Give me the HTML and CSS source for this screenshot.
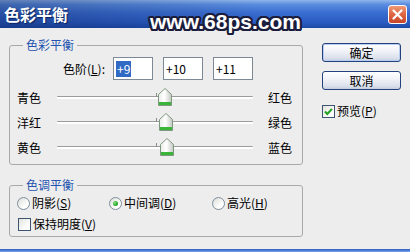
FILE: index.html
```html
<!DOCTYPE html>
<html lang="zh">
<head>
<meta charset="utf-8">
<link rel="stylesheet" href="styles.css">
</head>
<body>
<div class="window">
  <div class="titlebar">
    <span class="title">色彩平衡</span>
    <span class="close"><svg width="11" height="11" viewBox="0 0 11 11"><path d="M1.5 1.5l8 8M9.5 1.5l-8 8" stroke="#fff" stroke-width="2.2" stroke-linecap="round"/></svg></span>
  </div>
  <div class="content">
    <div class="main">
      <div class="group g1">
        <div class="gtitle">色彩平衡</div>
        <div class="levels">
          <span class="lvl-label">色阶(<u>L</u>):</span>
          <span class="field"><span class="sel">+9</span></span>
          <span class="field">+10</span>
          <span class="field">+11</span>
        </div>
        <div class="sliders">
          <div class="srow">
            <span class="sl">青色</span>
            <span class="track">
              <svg class="thumb" style="left:101px" width="14" height="18" viewBox="0 0 14 18"><defs><linearGradient id="tg" x1="0" x2="1" y1="0" y2="0"><stop offset="0" stop-color="#e9ece9"/><stop offset=".45" stop-color="#ffffff"/><stop offset="1" stop-color="#c3c9c3"/></linearGradient></defs><path d="M.5 6.5L7 .5l6.5 6v11H.5z" fill="url(#tg)" stroke="#7f977f"/><rect x="1" y="14" width="12" height="3" fill="#3ab53a"/></svg>
            </span>
            <span class="sr">红色</span>
          </div>
          <div class="srow">
            <span class="sl">洋红</span>
            <span class="track">
              <svg class="thumb" style="left:102px" width="14" height="18" viewBox="0 0 14 18"><path d="M.5 6.5L7 .5l6.5 6v11H.5z" fill="url(#tg)" stroke="#7f977f"/><rect x="1" y="14" width="12" height="3" fill="#3ab53a"/></svg>
            </span>
            <span class="sr">绿色</span>
          </div>
          <div class="srow">
            <span class="sl">黄色</span>
            <span class="track">
              <svg class="thumb" style="left:103px" width="14" height="18" viewBox="0 0 14 18"><path d="M.5 6.5L7 .5l6.5 6v11H.5z" fill="url(#tg)" stroke="#7f977f"/><rect x="1" y="14" width="12" height="3" fill="#3ab53a"/></svg>
            </span>
            <span class="sr">蓝色</span>
          </div>
        </div>
      </div>
      <div class="group g2">
        <div class="gtitle">色调平衡</div>
        <div class="radios">
          <span class="opt o1"><span class="radio"></span>阴影(<u>S</u>)</span>
          <span class="opt o2"><span class="radio on"></span>中间调(<u>D</u>)</span>
          <span class="opt"><span class="radio"></span>高光(<u>H</u>)</span>
        </div>
        <div class="checkrow"><span class="check"></span>保持明度(<u>V</u>)</div>
      </div>
    </div>
    <div class="side">
      <div class="btn btn-default">确定</div>
      <div class="btn">取消</div>
      <div class="preview"><span class="check on"><svg width="11" height="11" viewBox="0 0 11 11"><path d="M2 5.5l2.3 2.5L9 2.8" fill="none" stroke="#21a121" stroke-width="2"/></svg></span>预览(<u>P</u>)</div>
    </div>
  </div>
  <div class="frame-bottom"></div>
  <div class="watermark">www.68ps.com</div>
</div>
</body>
</html>
```

FILE: styles.css
```css
* { box-sizing: border-box; margin: 0; padding: 0; }
html, body { width: 410px; height: 252px; overflow: hidden; }
body {
  font-family: "Noto Sans CJK SC", "Noto Sans", sans-serif;
  font-size: 12px;
  line-height: 16px;
  color: #000;
  background: #ededed;
}
u { text-decoration: underline; text-underline-offset: 1px; }

.window {
  position: relative;
  width: 410px;
  height: 252px;
  display: flex;
  flex-direction: column;
  background: #ededed;
  overflow: hidden;
}

.titlebar {
  height: 28px;
  flex: none;
  display: flex;
  align-items: center;
  justify-content: space-between;
  padding: 0 3px 0 4px;
  background:
    linear-gradient(90deg, rgba(8, 25, 80, .35), rgba(8, 25, 80, 0) 65%),
    linear-gradient(180deg, #90b6ec 0%, #5a8ddf 16%, #3a6ed0 45%, #2a5bc0 80%, #1d4aa8 100%);
}
.title {
  color: #fff;
  font-weight: bold;
  font-size: 16px;
  line-height: 20px;
  text-shadow: 1px 1px 1px #0b2260;
}
.close {
  width: 19px;
  height: 19px;
  border: 1px solid #fff;
  border-radius: 3px;
  background: linear-gradient(180deg, #f09a78 0%, #e06a45 45%, #c8452a 100%);
  display: flex;
  align-items: center;
  justify-content: center;
}

.content {
  flex: 1;
  display: flex;
}
.main {
  width: 294px;
  margin-left: 9px;
  padding-top: 17px;
}

.group {
  border: 1px solid #a9a9a9;
  border-radius: 3px;
}
.gtitle {
  width: fit-content;
  margin: -9px 0 0 13px;
  padding: 0 3px;
  height: 16px;
  line-height: 16px;
  color: #2453b0;
  background: #ededed;
}

.g1 { padding-bottom: 4px; }
.levels {
  display: flex;
  align-items: center;
  height: 23px;
  margin-top: 4px;
  padding-left: 48px;
}
.lvl-label {
  width: 47px;
  text-align: right;
  margin-right: 8px;
}
.field {
  width: 40px;
  height: 23px;
  margin-right: 10px;
  border: 1px solid #7d8a96;
  background: #fff;
  padding-left: 2px;
  line-height: 21px;
}
.sel {
  display: inline-block;
  background: #316ac5;
  color: #fff;
  padding: 0 1px;
  line-height: 16px;
}

.sliders { margin-top: 5px; }
.srow {
  display: flex;
  align-items: center;
  height: 25px;
  padding-left: 7px;
}
.sl { width: 40px; }
.track {
  position: relative;
  width: 196px;
  height: 25px;
  flex: none;
}
.track::before {
  content: "";
  position: absolute;
  left: 0;
  right: 0;
  top: 11px;
  height: 2px;
  border-top: 1px solid #9c9c9c;
  background: #fff;
  border-radius: 1px;
}
.track::after {
  content: "";
  position: absolute;
  left: 99px;
  top: 8px;
  width: 1px;
  height: 4px;
  background: #8c8c8c;
}
.thumb {
  position: absolute;
  top: 3px;
}
.sr { margin-left: 15px; }

.g2 {
  margin-top: 20px;
  padding-bottom: 2px;
}
.radios {
  display: flex;
  align-items: center;
  height: 20px;
  padding-left: 7px;
}
.opt { display: flex; align-items: center; }
.o1 { width: 92px; }
.o2 { width: 103px; }
.radio {
  position: relative;
  width: 13px;
  height: 13px;
  margin-right: 2px;
  border: 1px solid #7d8d9e;
  border-radius: 50%;
  background: linear-gradient(135deg, #dcdcd6, #ffffff 70%);
}
.radio.on::after {
  content: "";
  position: absolute;
  left: 3px;
  top: 3px;
  width: 5px;
  height: 5px;
  border-radius: 50%;
  background: radial-gradient(circle at 35% 35%, #7be07b, #21a121 70%);
}
.checkrow {
  display: flex;
  align-items: center;
  height: 20px;
  margin-top: 1px;
  padding-left: 8px;
}
.check {
  width: 13px;
  height: 13px;
  margin-right: 2px;
  border: 1px solid #3b5570;
  background: linear-gradient(135deg, #e2e2dc, #ffffff 75%);
  display: flex;
  align-items: center;
  justify-content: center;
}

.side {
  width: 80px;
  margin-left: 19px;
  padding-top: 15px;
}
.btn {
  width: 79px;
  height: 19px;
  border: 1px solid #23417c;
  border-radius: 3px;
  background: linear-gradient(180deg, #ffffff 0%, #f1f3f8 40%, #d9dfea 85%, #c4cddd 100%);
  text-align: center;
  line-height: 17px;
}
.btn + .btn { margin-top: 9px; }
.btn-default { box-shadow: inset 0 0 0 1px #b9cdf0; }
.preview {
  display: flex;
  align-items: center;
  height: 14px;
  margin-top: 14px;
}
.preview .check { margin-right: 2px; }

.frame-bottom {
  height: 3px;
  flex: none;
  background: linear-gradient(180deg, #2a5abc 0%, #4f80d8 50%, #7ba5e8 100%);
}

.watermark {
  position: absolute;
  left: 150px;
  top: 10px;
  font-family: "Liberation Sans", Arial, sans-serif;
  font-weight: bold;
  font-size: 21px;
  line-height: 24px;
  color: #fff;
  text-shadow:
    2px 0 0 #1b1d3c, -2px 0 0 #1b1d3c, 0 2px 0 #1b1d3c, 0 -2px 0 #1b1d3c,
    1.5px 1.5px 0 #1b1d3c, -1.5px 1.5px 0 #1b1d3c, 1.5px -1.5px 0 #1b1d3c, -1.5px -1.5px 0 #1b1d3c,
    1px 2px 0 #1b1d3c, -1px 2px 0 #1b1d3c, 1px -2px 0 #1b1d3c, -1px -2px 0 #1b1d3c,
    2px 1px 0 #1b1d3c, -2px 1px 0 #1b1d3c, 2px -1px 0 #1b1d3c, -2px -1px 0 #1b1d3c;
}
```
